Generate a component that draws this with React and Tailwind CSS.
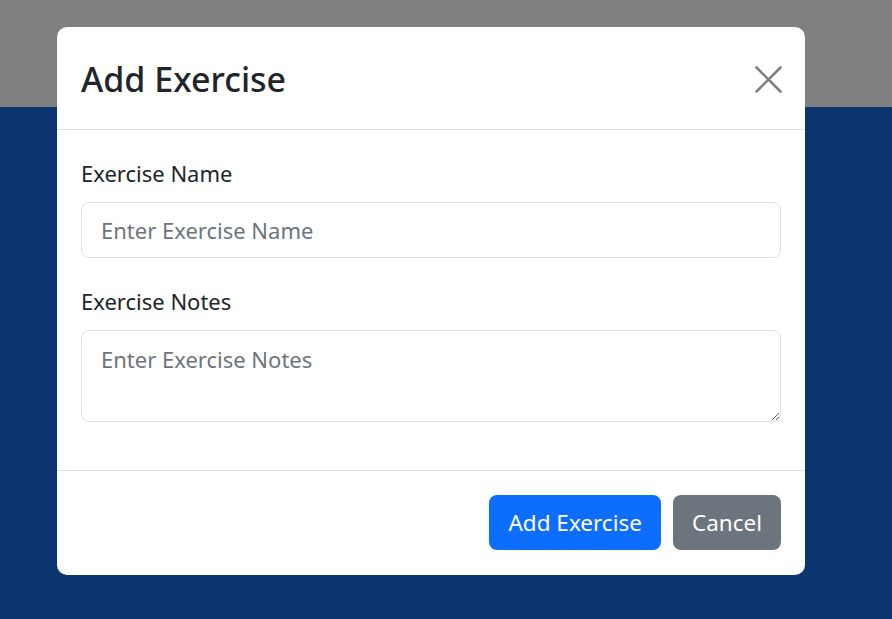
import React from "react";

export default function App() {
  return (
    <div
      className="relative h-[619px] w-full overflow-hidden bg-[#0c346e]"
      style={{ fontFamily: '"Noto Sans", "Segoe UI", sans-serif' }}
    >
      {/* page behind the backdrop */}
      <div className="h-[107px] bg-[#808080]" />

      {/* modal */}
      <div className="absolute left-[57px] top-[27px] w-[748px] rounded-[10px] bg-white">
        <div className="flex h-[103px] items-center justify-between border-b border-[#dee2e6] pl-[24px] pr-[22px] pt-[2px]">
          <h5 className="text-[34px] leading-[40px] font-medium text-[#212529]">
            Add Exercise
          </h5>
          <button className="flex h-[30px] w-[30px] items-center justify-center">
            <svg width="27" height="27" viewBox="0 0 27 27" fill="none">
              <path
                d="M1.5 1.5 25.5 25.5M25.5 1.5 1.5 25.5"
                stroke="#808080"
                strokeWidth="2.6"
                strokeLinecap="round"
              />
            </svg>
          </button>
        </div>

        <div className="px-[24px] pt-[28px] pb-[48px]">
          <label className="mb-[14px] block text-[22px] leading-[30px] text-[#212529]">
            Exercise Name
          </label>
          <input
            type="text"
            placeholder="Enter Exercise Name"
            className="mb-[28px] block h-[56px] w-full rounded-[8px] border border-[#dee2e6] px-[19px] text-[22px] text-[#212529] outline-none placeholder:text-[#6c757d]"
          />

          <label className="mb-[14px] block text-[22px] leading-[30px] text-[#212529]">
            Exercise Notes
          </label>
          <textarea
            rows={2}
            placeholder="Enter Exercise Notes"
            className="block h-[92px] w-full rounded-[8px] border border-[#dee2e6] px-[19px] py-[13px] text-[22px] leading-[30px] text-[#212529] outline-none placeholder:text-[#6c757d]"
          />
        </div>

        <div className="flex justify-end gap-[12px] border-t border-[#dee2e6] px-[24px] pt-[24px] pb-[25px]">
          <button className="h-[55px] rounded-[8px] bg-[#0d6efd] px-[19px] text-[22.5px] text-white">
            Add Exercise
          </button>
          <button className="h-[55px] rounded-[8px] bg-[#6c757d] px-[19px] text-[22.5px] text-white">
            Cancel
          </button>
        </div>
      </div>
    </div>
  );
}
